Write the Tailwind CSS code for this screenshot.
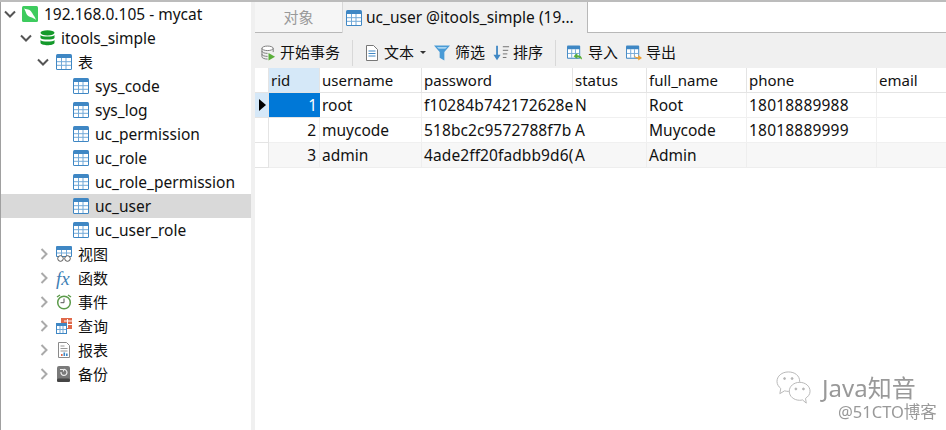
<!DOCTYPE html>
<html>
<head>
<meta charset="utf-8">
<script src="https://cdn.jsdelivr.net/npm/@tailwindcss/browser@4"></script>
</head>
<body class="relative w-[946px] h-[430px] overflow-hidden bg-white text-[15.5px] text-[#111] font-['Noto_Sans','Noto_Sans_CJK_SC',sans-serif]">
<svg class="hidden">
  <symbol id="tbl" viewBox="0 0 16 16">
    <rect x="0" y="0" width="16" height="16" rx="1.5" fill="#3f87c4"/>
    <rect x="1" y="4" width="14" height="11" fill="#fff"/>
    <path d="M5.5 4v11M10 4v11M1 7.7h14M1 11.3h14" stroke="#72a9d8" stroke-width="1" fill="none"/>
  </symbol>
  <symbol id="chevd" viewBox="0 0 12 8"><path d="M1 1.5l5 5 5-5" fill="none" stroke="#555" stroke-width="2"/></symbol>
  <symbol id="chevr" viewBox="0 0 8 12"><path d="M1.5 1l5 5-5 5" fill="none" stroke="#aaa" stroke-width="2"/></symbol>
</svg>

<div class="flex flex-col h-full">
  <div class="h-[2px] bg-[#bcbcbc] shrink-0"></div>
  <div class="flex flex-1 min-h-0">
    <!-- sidebar -->
    <div class="w-[251px] shrink-0 border-l border-l-[#a0a0a0] bg-white">
      <div class="h-6 flex items-center pl-[3px]">
        <svg class="w-[12px] h-[8px] mr-[6px]"><use href="#chevd"/></svg>
        <svg class="w-4 h-4 mr-[6px]" viewBox="0 0 16 16"><rect width="16" height="16" rx="1.5" fill="#3ecb5e"/><path d="M2 2.500c2 1 3.500.5 5.500 1.500 2 1.200 2.500 3 3.500 4.500.8 1.300 2 2.300 3 5.500-1.500-1.500-2.800-2-4-2.500-2.500-.5-4.500-1.500-5.500-3.500C3.800 6.500 3.500 4.500 2 2.500z" fill="#fff"/></svg>
        <span class="whitespace-nowrap pt-[1px]">192.168.0.105 - mycat</span>
      </div>
      <div class="h-6 flex items-center pl-[19px]">
        <svg class="w-[12px] h-[8px] mr-[8px]"><use href="#chevd"/></svg>
        <svg class="w-[15px] h-[16px] mr-[6px]" viewBox="0 0 15 16"><ellipse cx="7.500" cy="2.800" rx="7" ry="2.600" fill="#149a2b"/><path d="M.5 5c1 2 13 2 14 0v3c-1 2-13 2-14 0z" fill="#149a2b"/><path d="M.5 10c1 2 13 2 14 0v3c-1 3-13 3-14 0z" fill="#149a2b"/></svg>
        <span class="pt-[1px]">itools_simple</span>
      </div>
      <div class="h-6 flex items-center pl-[36px]">
        <svg class="w-[12px] h-[8px] mr-[7px]"><use href="#chevd"/></svg>
        <svg class="w-4 h-4 mr-[6px]"><use href="#tbl"/></svg>
        <span class="text-[15px]">表</span>
      </div>
      <div class="h-6 flex items-center pl-[72px]"><svg class="w-4 h-4 mr-[6px]"><use href="#tbl"/></svg><span class="pt-[1px]">sys_code</span></div>
      <div class="h-6 flex items-center pl-[72px]"><svg class="w-4 h-4 mr-[6px]"><use href="#tbl"/></svg><span class="pt-[1px]">sys_log</span></div>
      <div class="h-6 flex items-center pl-[72px]"><svg class="w-4 h-4 mr-[6px]"><use href="#tbl"/></svg><span class="pt-[1px]">uc_permission</span></div>
      <div class="h-6 flex items-center pl-[72px]"><svg class="w-4 h-4 mr-[6px]"><use href="#tbl"/></svg><span class="pt-[1px]">uc_role</span></div>
      <div class="h-6 flex items-center pl-[72px]"><svg class="w-4 h-4 mr-[6px]"><use href="#tbl"/></svg><span class="pt-[1px]">uc_role_permission</span></div>
      <div class="h-6 flex items-center pl-[72px] bg-[#d9d9d9]"><svg class="w-4 h-4 mr-[6px]"><use href="#tbl"/></svg><span class="pt-[1px]">uc_user</span></div>
      <div class="h-6 flex items-center pl-[72px]"><svg class="w-4 h-4 mr-[6px]"><use href="#tbl"/></svg><span class="pt-[1px]">uc_user_role</span></div>

      <div class="h-6 flex items-center pl-[39px]">
        <svg class="w-2 h-3 mr-[8px]"><use href="#chevr"/></svg>
        <svg class="w-4 h-4 mr-[6px]" viewBox="0 0 16 16"><rect width="16" height="11" rx="1" fill="#3f87c4"/><rect x="1" y="4" width="14" height="6" fill="#fff"/><path d="M5.500 4v6M10.500 4v6M1 7h14" stroke="#72a9d8"/><circle cx="4.500" cy="12.500" r="2.800" fill="#fff" stroke="#555"/><circle cx="11.500" cy="12.500" r="2.800" fill="#fff" stroke="#555"/></svg>
        <span class="text-[15px]">视图</span>
      </div>
      <div class="h-6 flex items-center pl-[39px]">
        <svg class="w-2 h-3 mr-[8px]"><use href="#chevr"/></svg>
        <span class="w-4 mr-[6px] text-[19px] leading-none italic text-[#3f7fb5] font-['Liberation_Serif',serif] whitespace-nowrap">fx</span>
        <span class="text-[15px]">函数</span>
      </div>
      <div class="h-6 flex items-center pl-[39px]">
        <svg class="w-2 h-3 mr-[8px]"><use href="#chevr"/></svg>
        <svg class="w-4 h-4 mr-[6px]" viewBox="0 0 16 16"><circle cx="8" cy="8.500" r="6.300" fill="#fff" stroke="#5b9a4a" stroke-width="1.500"/><path d="M1 3l3-2M15 3l-3-2" stroke="#5b9a4a" stroke-width="1.500"/><path d="M8 4.500v4.200H4.500" fill="none" stroke="#555" stroke-width="1"/></svg>
        <span class="text-[15px]">事件</span>
      </div>
      <div class="h-6 flex items-center pl-[39px]">
        <svg class="w-2 h-3 mr-[8px]"><use href="#chevr"/></svg>
        <svg class="w-4 h-4 mr-[6px]" viewBox="0 0 16 16"><rect x="5" y="0" width="11" height="11" fill="#e0694a"/><path d="M8 3h8M8 6.500h8M11.500 1v9" stroke="#fff"/><rect x="0" y="5" width="11" height="11" fill="#3f87c4"/><rect x="1" y="8" width="9" height="7" fill="#fff"/><path d="M4 8v7M7 8v7M1 11.500h9" stroke="#72a9d8"/></svg>
        <span class="text-[15px]">查询</span>
      </div>
      <div class="h-6 flex items-center pl-[39px]">
        <svg class="w-2 h-3 mr-[8px]"><use href="#chevr"/></svg>
        <svg class="w-4 h-4 mr-[6px]" viewBox="0 0 16 16"><path d="M2.500.5h8l3 3v12h-11z" fill="#fff" stroke="#8a8a8a"/><path d="M4.500 4h4M4.500 6.500h7M4.500 9h7" stroke="#999"/><rect x="5" y="12" width="1.600" height="2" fill="#e0694a"/><rect x="7.500" y="10.500" width="1.600" height="3.500" fill="#3f87c4"/><rect x="10" y="11.500" width="1.600" height="2.500" fill="#3f87c4"/></svg>
        <span class="text-[15px]">报表</span>
      </div>
      <div class="h-6 flex items-center pl-[39px]">
        <svg class="w-2 h-3 mr-[8px]"><use href="#chevr"/></svg>
        <svg class="w-4 h-4 mr-[6px]" viewBox="0 0 16 16"><rect x="1" y="0" width="13" height="16" rx="2" fill="#7a7a7a"/><rect x="1" y="12.500" width="13" height="3.500" rx="1.500" fill="#454545"/><path d="M5 6a3 3 0 1 0 2.500-2.500" fill="none" stroke="#eee" stroke-width="1.200"/><path d="M4 3.500h3.500v2" fill="none" stroke="#eee"/></svg>
        <span class="text-[15px]">备份</span>
      </div>
    </div>

    <div class="w-[4px] shrink-0 bg-[#f0f0f0]"></div>

    <!-- main -->
    <div class="flex-1 min-w-0 flex flex-col">
      <!-- tabs -->
      <div class="h-[31px] shrink-0 flex">
        <div class="w-[87px] bg-[#f6f6f6] border-b border-b-[#b8b8b8] flex items-center justify-center text-[15px] text-[#999]">对象</div>
        <div class="w-[245px] bg-[#f0f0f0] flex items-center pl-[3px] whitespace-nowrap text-[15.5px] border-l border-l-[#d8d8d8]">
          <svg class="w-4 h-4 mr-[4px] shrink-0"><use href="#tbl"/></svg><span>uc_user @itools_simple (19...</span>
        </div>
        <div class="flex-1 bg-white border-l border-b border-[#b8b8b8]"></div>
      </div>
      <!-- toolbar -->
      <div class="h-[35px] shrink-0 bg-[#f0f0f0] flex items-center text-[15px] pl-[6px] pt-[4px] whitespace-nowrap">
        <svg class="w-[15px] h-4 mr-[4px]" viewBox="0 0 16 16"><ellipse cx="7" cy="3" rx="6" ry="2.400" fill="#fff" stroke="#777"/><path d="M1 3v9c0 1.500 3 2.500 6 2.500M13 3v4M1 6c0 1.500 3 2.400 6 2.400M1 9.300c0 1.500 3 2.300 6 2.300" fill="none" stroke="#777"/><path d="M8 8l7 4-7 4z" fill="#5aae3a"/></svg>
        <span>开始事务</span>
        <div class="w-px h-[26px] bg-[#d8d8d8] ml-[12px] mr-[12px]"></div>
        <svg class="w-[14px] h-4 mr-[5px]" viewBox="0 0 14 16"><path d="M1.500.5h7l4 4v11h-11z" fill="#fff" stroke="#777"/><path d="M3.500 6h7M3.500 8.500h7M3.500 11h7" stroke="#3f87c4"/></svg>
        <span>文本</span>
        <span class="ml-[6px] mr-[8px] w-0 h-0 border-x-[3px] border-x-transparent border-t-[3px] border-t-[#333]"></span>
        <svg class="w-4 h-4 mr-[5px]" viewBox="0 0 17 16"><path d="M0 0h17l-6 7v9l-5-3V7z" fill="#4a9bd6"/><path d="M3 1.500h11l-2 2H5z" fill="#a8d4f0"/></svg>
        <span>筛选</span>
        <svg class="w-[17px] h-4 ml-[8px] mr-[3px]" viewBox="0 0 19 16"><path d="M4.500 0v12" stroke="#3f87c4" stroke-width="2"/><path d="M0.500 10h8l-4 6z" fill="#3f87c4"/><path d="M11 1h7M11 5h6M11 9h5M11 13h4" stroke="#666"/></svg>
        <span>排序</span>
        <div class="w-px h-[26px] bg-[#d8d8d8] ml-[12px] mr-[11px]"></div>
        <svg class="w-4 h-4 mr-[5px]" viewBox="0 0 17 16"><rect width="14" height="14" rx="1" fill="#3f87c4"/><rect x="1" y="4" width="12" height="9" fill="#fff"/><path d="M5 4v9M9 4v9M1 8.500h12" stroke="#72a9d8"/><path d="M16 15c0-3-2-4.500-5-4.500V8l-4 3.500 4 3V12.500c2 0 3 1 5 2.500z" fill="#5aae3a"/></svg>
        <span>导入</span>
        <svg class="w-4 h-4 ml-[8px] mr-[4px]" viewBox="0 0 17 16"><rect width="14" height="14" rx="1" fill="#3f87c4"/><rect x="1" y="4" width="12" height="9" fill="#fff"/><path d="M5 4v9M9 4v9M1 8.500h12" stroke="#72a9d8"/><path d="M8 8c0 3 2 4.500 5 4.500V10l4 3.200-4 2.800v-2c-3 0-5-2-5-6z" fill="#f0a030"/></svg>
        <span>导出</span>
      </div>
      <!-- table -->
      <div class="flex-1 bg-white text-[15px]">
        <div class="grid grid-cols-[14px_51px_102px_151px_74px_100px_130px_69px] grid-rows-[25px_25px_25px_25px] whitespace-nowrap">
          <div class="bg-white border-r border-b border-[#e4e4e4]"></div>
          <div class="bg-[#d5e8f8] pl-[2px] leading-[24px] border-r border-b border-[#e4e4e4]">rid</div>
          <div class="pl-[2px] leading-[24px] border-r border-b border-[#e4e4e4]">username</div>
          <div class="pl-[2px] leading-[24px] border-r border-b border-[#e4e4e4]">password</div>
          <div class="pl-[2px] leading-[24px] border-r border-b border-[#e4e4e4]">status</div>
          <div class="pl-[2px] leading-[24px] border-r border-b border-[#e4e4e4]">full_name</div>
          <div class="pl-[2px] leading-[24px] border-r border-b border-[#e4e4e4]">phone</div>
          <div class="pl-[2px] leading-[24px] border-b border-[#e4e4e4]">email</div>

          <div class="bg-[#d5e8f8] border-r border-b border-[#e4e4e4] flex items-center pl-[4px]"><span class="w-0 h-0 border-y-[6px] border-y-transparent border-l-[7px] border-l-black"></span></div>
          <div class="bg-[#0078d7] text-white text-right pr-[3px] text-[15.5px] leading-[24px] border-b border-[#e4e4e4]">1</div>
          <div class="pl-[2px] text-[15.5px] leading-[24px] border-r border-b border-[#f0f0f0]">root</div>
          <div class="pl-[2px] text-[15.5px] tracking-[0.1px] leading-[24px] border-b border-[#f0f0f0] overflow-hidden">f10284b742172628e</div>
          <div class="pl-[2px] text-[15.5px] leading-[24px] border-r border-b border-[#f0f0f0]">N</div>
          <div class="pl-[2px] text-[15.5px] leading-[24px] border-r border-b border-[#f0f0f0]">Root</div>
          <div class="pl-[2px] text-[15.5px] tracking-[0.2px] leading-[24px] border-r border-b border-[#f0f0f0]">18018889988</div>
          <div class="border-b border-[#f0f0f0]"></div>

          <div class="border-r border-b border-[#e4e4e4]"></div>
          <div class="text-right pr-[3px] text-[15.5px] leading-[24px] border-r border-b border-[#f0f0f0]">2</div>
          <div class="pl-[2px] text-[15.5px] leading-[24px] border-r border-b border-[#f0f0f0]">muycode</div>
          <div class="pl-[2px] text-[15.5px] tracking-[0.1px] leading-[24px] border-b border-[#f0f0f0] overflow-hidden">518bc2c9572788f7b</div>
          <div class="pl-[2px] text-[15.5px] leading-[24px] border-r border-b border-[#f0f0f0]">A</div>
          <div class="pl-[2px] text-[15.5px] leading-[24px] border-r border-b border-[#f0f0f0]">Muycode</div>
          <div class="pl-[2px] text-[15.5px] tracking-[0.2px] leading-[24px] border-r border-b border-[#f0f0f0]">18018889999</div>
          <div class="border-b border-[#f0f0f0]"></div>

          <div class="border-r border-b border-[#e4e4e4]"></div>
          <div class="bg-[#f7f7f7] text-right pr-[3px] text-[15.5px] leading-[24px] border-r border-b border-[#eeeeee]">3</div>
          <div class="bg-[#f7f7f7] pl-[2px] text-[15.5px] leading-[24px] border-r border-b border-[#eeeeee]">admin</div>
          <div class="bg-[#f7f7f7] pl-[2px] text-[15.5px] tracking-[0.1px] leading-[24px] border-b border-[#eeeeee] overflow-hidden">4ade2ff20fadbb9d6(</div>
          <div class="bg-[#f7f7f7] pl-[2px] text-[15.5px] leading-[24px] border-r border-b border-[#eeeeee]">A</div>
          <div class="bg-[#f7f7f7] pl-[2px] text-[15.5px] leading-[24px] border-r border-b border-[#eeeeee]">Admin</div>
          <div class="bg-[#f7f7f7] border-r border-b border-[#eeeeee]"></div>
          <div class="bg-[#f7f7f7] border-b border-[#eeeeee]"></div>
        </div>
      </div>
    </div>
  </div>
</div>

<!-- watermark -->
<div class="absolute left-[776px] top-[371px] flex items-start text-[#999] blur-[0.5px] whitespace-nowrap">
  <svg class="w-[36px] h-[34px] mr-[10px]" viewBox="0 0 38 36" fill="#fff" stroke="#b5b5b5" stroke-width="1"><path d="M13 1C6 1 1 5.500 1 11c0 3 1.500 5.500 4 7.500L4 24l5-3c1.500.4 3 .6 4 .6 7 0 12-4.600 12-10.600S20 1 13 1z"/><path d="M25 12c-6 0-11 4-11 9.500S19 31 25 31c1 0 2-.1 3-.4l4 3.400-.8-5c2.500-1.800 4.800-4 4.800-7.500C36 16 31 12 25 12z"/><circle cx="9" cy="8" r="1" fill="#b5b5b5"/><circle cx="17" cy="8" r="1" fill="#b5b5b5"/><circle cx="21" cy="19" r="1" fill="#b5b5b5"/><circle cx="29" cy="19" r="1" fill="#b5b5b5"/></svg>
  <div class="flex flex-col items-start pt-[2px]">
    <span class="text-[24px] leading-[30px]">Java知音</span>
    <span class="text-[16.5px] leading-[18px] ml-[16px]">@51CTO博客</span>
  </div>
</div>
</body>
</html>
